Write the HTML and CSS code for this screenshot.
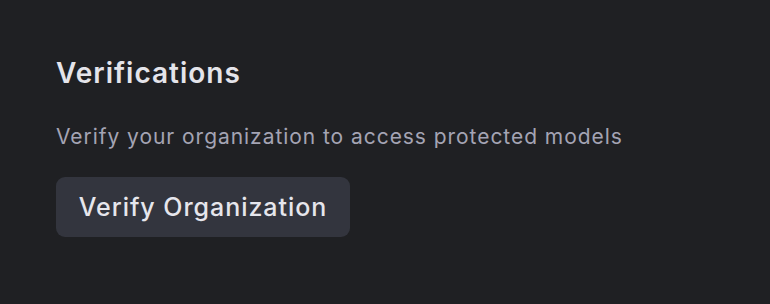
FILE: index.html
```html
<!DOCTYPE html>
<html>
<head>
<meta charset="utf-8">
<link rel="stylesheet" href="styles.css">
</head>
<body>
<section class="panel">
  <h2 class="title">Verifications</h2>
  <p class="desc">Verify your organization to access protected models</p>
  <button class="btn">Verify Organization</button>
</section>
</body>
</html>
```

FILE: styles.css
```css
html, body {
  margin: 0;
  background: #1f2023;
  height: 100%;
}
body {
  font-family: Inter, "Noto Sans", sans-serif;
}
.panel {
  padding: 53px 56px;
  display: flex;
  flex-direction: column;
  align-items: flex-start;
}
.title {
  margin: 0;
  font-size: 28px;
  font-weight: 600;
  letter-spacing: 1px;
  color: #e4e4ea;
  line-height: 40px;
}
.desc {
  margin: 29px 0 0;
  font-size: 21px;
  letter-spacing: 0.95px;
  color: #a4a4b4;
  line-height: 30px;
}
.btn {
  margin-top: 25px;
  height: 60px;
  width: 294px;
  padding: 0;
  border: none;
  border-radius: 9px;
  background: #33353e;
  color: #e6e6ec;
  font-family: inherit;
  font-size: 25px;
  font-weight: 500;
  letter-spacing: 0.95px;
}
```
